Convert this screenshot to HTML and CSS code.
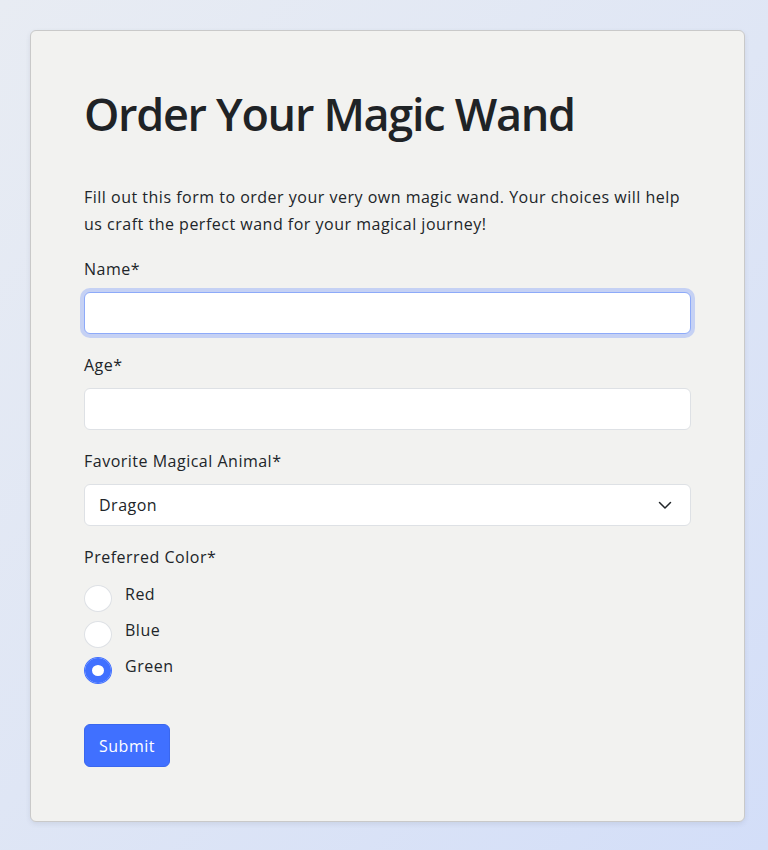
FILE: index.html
```html
<!DOCTYPE html>
<html lang="en">
<head>
<meta charset="utf-8">
<title>Order Your Magic Wand</title>
<link rel="stylesheet" href="styles.css">
</head>
<body>
<main class="card">
  <h1 class="title">Order Your Magic Wand</h1>
  <p class="intro">Fill out this form to order your very own magic wand. Your choices will help us craft the perfect wand for your magical journey!</p>
  <form class="form">
    <div class="group">
      <label class="label" for="name">Name*</label>
      <input class="control focused" id="name" type="text">
    </div>
    <div class="group">
      <label class="label" for="age">Age*</label>
      <input class="control" id="age" type="number">
    </div>
    <div class="group">
      <label class="label" for="animal">Favorite Magical Animal*</label>
      <div class="select-wrap">
        <select class="control select" id="animal">
          <option>Dragon</option>
          <option>Phoenix</option>
          <option>Unicorn</option>
        </select>
        <svg class="chevron" width="16" height="12" viewBox="0 0 16 12" aria-hidden="true"><path d="M2.5 3.5l5.5 5.5 5.5-5.5" fill="none" stroke="#212529" stroke-width="1.5" stroke-linecap="round" stroke-linejoin="round"/></svg>
      </div>
    </div>
    <div class="group radios">
      <div class="label label-radios">Preferred Color*</div>
      <label class="radio-row"><input class="radio" type="radio" name="color"><span>Red</span></label>
      <label class="radio-row"><input class="radio" type="radio" name="color"><span>Blue</span></label>
      <label class="radio-row"><input class="radio" type="radio" name="color" checked><span>Green</span></label>
    </div>
    <button class="submit" type="button">Submit</button>
  </form>
</main>
</body>
</html>
```
FILE: styles.css
```css
html {
  min-height: 100%;
  background: linear-gradient(135deg, #e8ecf3 0%, #dfe6f5 50%, #d3def8 100%);
}
body {
  margin: 0;
  min-height: 850px;
  font-family: "Open Sans", "Noto Sans", sans-serif;
  font-size: 16px;
  letter-spacing: 0.5px;
  color: #212529;
}
.card {
  box-sizing: border-box;
  width: 715px;
  margin: 30px 0 0 30px;
  padding: 53px 53px 54px;
  background: #f2f2f0;
  border: 1px solid #c9c9c9;
  border-radius: 6px;
  box-shadow: 0 2px 5px rgba(60, 70, 90, 0.1);
}
.title {
  margin: 3px 0 43px;
  font-size: 45px;
  font-weight: 600;
  line-height: 54px;
  letter-spacing: -1.3px;
  color: #1f2326;
}
.intro {
  margin: 0 0 19px;
  line-height: 27.2px;
}
.form {
  display: flex;
  flex-direction: column;
}
.group {
  display: flex;
  flex-direction: column;
  margin-bottom: 19px;
}
.label {
  line-height: 24px;
  margin-bottom: 11px;
}
.label-radios {
  margin-bottom: 13px;
}
.control {
  box-sizing: border-box;
  height: 42px;
  width: 100%;
  margin: 0;
  padding: 8px 14px;
  font: inherit;
  letter-spacing: inherit;
  line-height: 24px;
  color: #212529;
  background: #fff;
  border: 1px solid #dee1e5;
  border-radius: 6px;
  outline: none;
}
.control.focused {
  border-color: #8daaf9;
  box-shadow: 0 0 0 4px rgba(64, 112, 255, 0.25);
}
.select-wrap {
  position: relative;
}
.select {
  appearance: none;
  -webkit-appearance: none;
  padding-right: 40px;
}
.chevron {
  position: absolute;
  right: 18px;
  top: 15px;
  pointer-events: none;
}
.radios {
  margin-bottom: 0;
}
.radio-row {
  display: flex;
  align-items: flex-start;
  gap: 13px;
  line-height: 24px;
  margin-bottom: 6px;
}
.radio {
  appearance: none;
  -webkit-appearance: none;
  flex: none;
  box-sizing: border-box;
  width: 28px;
  height: 27px;
  margin: 3px 0 0;
  background: #fff;
  border: 1px solid #dee1e5;
  border-radius: 50%;
}
.radio:checked {
  border-color: #4070ff;
  box-shadow: inset 0 0 0 7px #4070ff;
}
.submit {
  align-self: flex-start;
  margin-top: 34px;
  padding: 8px 14px;
  height: 43px;
  font: inherit;
  letter-spacing: inherit;
  line-height: 24px;
  color: #fff;
  background: #4070ff;
  border: 1px solid #3a67ee;
  border-radius: 6px;
}
```
